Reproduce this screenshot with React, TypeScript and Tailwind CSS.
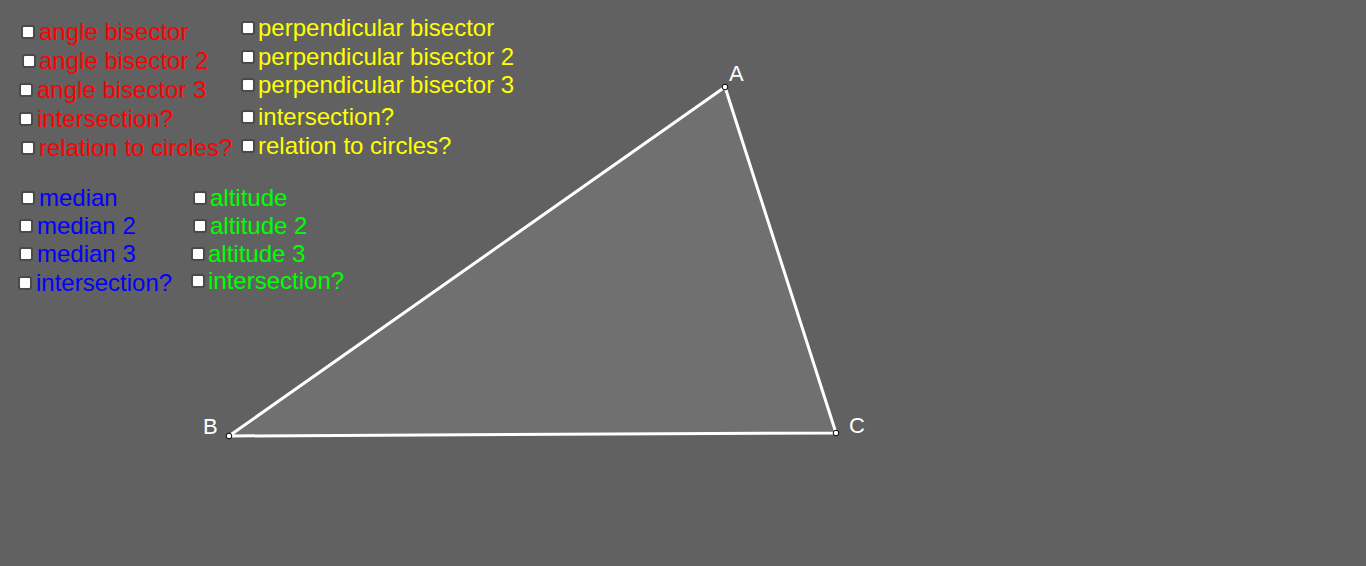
import React from 'react';

type Toggle = { label: string; x: number; y: number; color: string; tx: number };

// x/y = checkbox top-left on the canvas, tx = where the caption starts
const toggles: Toggle[] = [
  { label: 'angle bisector', x: 22, y: 26, tx: 39, color: 'text-[#ff0000]' },
  { label: 'angle bisector 2', x: 23, y: 55, tx: 39, color: 'text-[#ff0000]' },
  { label: 'angle bisector 3', x: 20, y: 84, tx: 37, color: 'text-[#ff0000]' },
  { label: 'intersection?', x: 20, y: 113, tx: 37, color: 'text-[#ff0000]' },
  { label: 'relation to circles?', x: 22, y: 142, tx: 39, color: 'text-[#ff0000]' },
  { label: 'perpendicular bisector', x: 242, y: 22, tx: 258, color: 'text-[#ffff00]' },
  { label: 'perpendicular bisector 2', x: 242, y: 51, tx: 258, color: 'text-[#ffff00]' },
  { label: 'perpendicular bisector 3', x: 242, y: 79, tx: 258, color: 'text-[#ffff00]' },
  { label: 'intersection?', x: 242, y: 111, tx: 258, color: 'text-[#ffff00]' },
  { label: 'relation to circles?', x: 242, y: 140, tx: 258, color: 'text-[#ffff00]' },
  { label: 'median', x: 22, y: 192, tx: 39, color: 'text-[#0000ff]' },
  { label: 'median 2', x: 20, y: 220, tx: 37, color: 'text-[#0000ff]' },
  { label: 'median 3', x: 20, y: 248, tx: 37, color: 'text-[#0000ff]' },
  { label: 'intersection?', x: 19, y: 277, tx: 36, color: 'text-[#0000ff]' },
  { label: 'altitude', x: 194, y: 192, tx: 210, color: 'text-[#00ff00]' },
  { label: 'altitude 2', x: 194, y: 220, tx: 210, color: 'text-[#00ff00]' },
  { label: 'altitude 3', x: 192, y: 248, tx: 208, color: 'text-[#00ff00]' },
  { label: 'intersection?', x: 192, y: 275, tx: 208, color: 'text-[#00ff00]' },
];

const A = { x: 725, y: 87 };
const B = { x: 229, y: 436 };
const C = { x: 836, y: 433 };

const CheckItem: React.FC<{ t: Toggle }> = ({ t }) => (
  <label
    className="absolute flex items-center cursor-pointer select-none"
    style={{ left: t.x - 1, top: t.y - 6 }}
  >
    <span className="w-[14px] h-[14px] shrink-0 rounded-[3px] border-2 border-[#4a4a4a] bg-white" />
    <span
      className={`text-[24px] leading-[24px] whitespace-nowrap ${t.color}`}
      style={{ marginLeft: t.tx - t.x - 13 }}
    >
      {t.label}
    </span>
  </label>
);

export default function App() {
  return (
    <div className="relative w-full h-[566px] overflow-hidden bg-[#616161] font-['Liberation_Sans',Arial,sans-serif]">
      <svg className="absolute inset-0" width="1366" height="566">
        <polygon
          points={`${A.x},${A.y} ${B.x},${B.y} ${C.x},${C.y}`}
          fill="#707070"
          stroke="#ffffff"
          strokeWidth="3"
          strokeLinejoin="round"
        />
        {[A, B, C].map((p, i) => (
          <circle key={i} cx={p.x} cy={p.y} r="2.8" fill="#ffffff" stroke="#000000" strokeWidth="1" />
        ))}
        <g fill="#ffffff" fontFamily="'Liberation Sans', Arial, sans-serif" fontSize="22">
          <text x="729" y="81">A</text>
          <text x="203" y="434">B</text>
          <text x="849" y="433">C</text>
        </g>
      </svg>

      {toggles.map((t, i) => (
        <CheckItem key={i} t={t} />
      ))}
    </div>
  );
}
